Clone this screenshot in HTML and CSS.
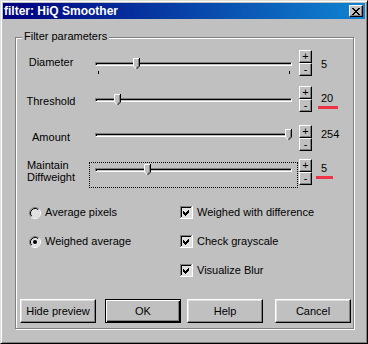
FILE: index.html
```html
<!DOCTYPE html>
<html>
<head>
<meta charset="utf-8">
<title>filter: HiQ Smoother</title>
<link rel="stylesheet" href="styles.css">
</head>
<body>
<div class="window">
  <div class="titlebar">
    <span class="title">filter: HiQ Smoother</span>
    <button class="close" aria-label="Close">
      <svg width="8" height="7" viewBox="0 0 8 7" shape-rendering="crispEdges"><path fill="#000" d="M0 0h2v1h-2z M6 0h2v1h-2z M1 1h2v1h-2z M5 1h2v1h-2z M2 2h4v1h-4z M3 3h2v1h-2z M2 4h4v1h-4z M1 5h2v1h-2z M5 5h2v1h-2z M0 6h2v1h-2z M6 6h2v1h-2z"/></svg>
    </button>
  </div>

  <div class="group">
    <span class="group-label">Filter parameters</span>

    <div class="param param-1">
      <div class="param-label">Diameter</div>
      <div class="slider">
        <div class="track"></div>
        <svg class="thumb" style="left:44px" width="7" height="12" viewBox="0 0 7 12"><path d="M0 0H7V8L3.5 11.5L0 8Z" fill="#c0c0c0"/><path d="M0.5 8V0.5H6" stroke="#fff" fill="none"/><path d="M0.5 8L3.5 11" stroke="#fff" fill="none"/><path d="M6.5 0V8L3.5 11" stroke="#000" fill="none"/><path d="M5.5 1V7.6L3.5 9.6" stroke="#808080" fill="none"/></svg>
        <span class="tick tick-min"></span>
        <span class="tick tick-max"></span>
      </div>
      <div class="spin"><button class="spin-btn">+</button><button class="spin-btn">-</button></div>
      <div class="value">5</div>
    </div>

    <div class="param param-2">
      <div class="param-label">Threshold</div>
      <div class="slider">
        <div class="track"></div>
        <svg class="thumb" style="left:25px" width="7" height="12" viewBox="0 0 7 12"><path d="M0 0H7V8L3.5 11.5L0 8Z" fill="#c0c0c0"/><path d="M0.5 8V0.5H6" stroke="#fff" fill="none"/><path d="M0.5 8L3.5 11" stroke="#fff" fill="none"/><path d="M6.5 0V8L3.5 11" stroke="#000" fill="none"/><path d="M5.5 1V7.6L3.5 9.6" stroke="#808080" fill="none"/></svg>
      </div>
      <div class="spin"><button class="spin-btn">+</button><button class="spin-btn">-</button></div>
      <div class="value">20<span class="mark mark-wide"></span></div>
    </div>

    <div class="param param-3">
      <div class="param-label">Amount</div>
      <div class="slider">
        <div class="track"></div>
        <svg class="thumb" style="left:196px" width="7" height="12" viewBox="0 0 7 12"><path d="M0 0H7V8L3.5 11.5L0 8Z" fill="#c0c0c0"/><path d="M0.5 8V0.5H6" stroke="#fff" fill="none"/><path d="M0.5 8L3.5 11" stroke="#fff" fill="none"/><path d="M6.5 0V8L3.5 11" stroke="#000" fill="none"/><path d="M5.5 1V7.6L3.5 9.6" stroke="#808080" fill="none"/></svg>
      </div>
      <div class="spin"><button class="spin-btn">+</button><button class="spin-btn">-</button></div>
      <div class="value">254</div>
    </div>

    <div class="param param-4">
      <div class="param-label"><span class="label-lines">Maintain<br>Diffweight</span></div>
      <div class="slider slider-focus">
        <div class="track"></div>
        <svg class="thumb" style="left:54px" width="7" height="12" viewBox="0 0 7 12"><path d="M0 0H7V8L3.5 11.5L0 8Z" fill="#c0c0c0"/><path d="M0.5 8V0.5H6" stroke="#fff" fill="none"/><path d="M0.5 8L3.5 11" stroke="#fff" fill="none"/><path d="M6.5 0V8L3.5 11" stroke="#000" fill="none"/><path d="M5.5 1V7.6L3.5 9.6" stroke="#808080" fill="none"/></svg>
      </div>
      <div class="spin"><button class="spin-btn">+</button><button class="spin-btn">-</button></div>
      <div class="value">5<span class="mark mark-narrow"></span></div>
    </div>

    <div class="options">
      <div class="opt-col opt-col-radio">
        <label class="opt">
          <svg class="radio" width="12" height="12" viewBox="0 0 12 12"><circle cx="6" cy="6" r="4.5" fill="#e0e0e0"/><path d="M2.11 9.89A5.5 5.5 0 0 1 9.89 2.11" stroke="#808080" fill="none"/><path d="M9.89 2.11A5.5 5.5 0 0 1 2.11 9.89" stroke="#fff" fill="none"/><path d="M2.82 9.18A4.5 4.5 0 0 1 9.18 2.82" stroke="#000" fill="none"/><path d="M9.18 2.82A4.5 4.5 0 0 1 2.82 9.18" stroke="#dfdfdf" fill="none"/></svg>
          <span>Average pixels</span>
        </label>
        <label class="opt">
          <svg class="radio" width="12" height="12" viewBox="0 0 12 12"><circle cx="6" cy="6" r="4.5" fill="#e0e0e0"/><path d="M2.11 9.89A5.5 5.5 0 0 1 9.89 2.11" stroke="#808080" fill="none"/><path d="M9.89 2.11A5.5 5.5 0 0 1 2.11 9.89" stroke="#fff" fill="none"/><path d="M2.82 9.18A4.5 4.5 0 0 1 9.18 2.82" stroke="#000" fill="none"/><path d="M9.18 2.82A4.5 4.5 0 0 1 2.82 9.18" stroke="#dfdfdf" fill="none"/><circle cx="6" cy="6" r="2" fill="#000"/></svg>
          <span>Weighed average</span>
        </label>
      </div>
      <div class="opt-col opt-col-check">
        <label class="opt">
          <svg class="check" width="13" height="13" viewBox="0 0 13 13" shape-rendering="crispEdges"><rect x="2" y="2" width="9" height="9" fill="#e0e0e0"/><path d="M0.5 13V0.5H13" stroke="#808080" fill="none"/><path d="M1.5 12V1.5H12" stroke="#000" fill="none"/><path d="M0 12.5H12.5V0" stroke="#fff" fill="none"/><path d="M1 11.5H11.5V1" stroke="#dfdfdf" fill="none"/><path d="M3 5L5 7L9 3V6L5 10L3 8Z" fill="#000"/></svg>
          <span>Weighed with difference</span>
        </label>
        <label class="opt">
          <svg class="check" width="13" height="13" viewBox="0 0 13 13" shape-rendering="crispEdges"><rect x="2" y="2" width="9" height="9" fill="#e0e0e0"/><path d="M0.5 13V0.5H13" stroke="#808080" fill="none"/><path d="M1.5 12V1.5H12" stroke="#000" fill="none"/><path d="M0 12.5H12.5V0" stroke="#fff" fill="none"/><path d="M1 11.5H11.5V1" stroke="#dfdfdf" fill="none"/><path d="M3 5L5 7L9 3V6L5 10L3 8Z" fill="#000"/></svg>
          <span>Check grayscale</span>
        </label>
        <label class="opt">
          <svg class="check" width="13" height="13" viewBox="0 0 13 13" shape-rendering="crispEdges"><rect x="2" y="2" width="9" height="9" fill="#e0e0e0"/><path d="M0.5 13V0.5H13" stroke="#808080" fill="none"/><path d="M1.5 12V1.5H12" stroke="#000" fill="none"/><path d="M0 12.5H12.5V0" stroke="#fff" fill="none"/><path d="M1 11.5H11.5V1" stroke="#dfdfdf" fill="none"/><path d="M3 5L5 7L9 3V6L5 10L3 8Z" fill="#000"/></svg>
          <span>Visualize Blur</span>
        </label>
      </div>
    </div>

    <div class="buttons">
      <button class="btn btn-hide">Hide preview</button>
      <button class="btn btn-default btn-ok">OK</button>
      <button class="btn btn-help">Help</button>
      <button class="btn btn-cancel">Cancel</button>
    </div>
  </div>
</div>
</body>
</html>
```

FILE: styles.css
```css
* { box-sizing: border-box; }

html, body {
  margin: 0;
  padding: 0;
}

body {
  width: 368px;
  height: 344px;
  overflow: hidden;
  background: #c0c0c0;
  font-family: "Liberation Sans", Arial, sans-serif;
  font-size: 11px;
  line-height: 13px;
  color: #000;
}

.window {
  width: 368px;
  height: 344px;
  background: #c0c0c0;
  border: 1px solid;
  border-color: #dfdfdf #000 #000 #dfdfdf;
  box-shadow: inset 1px 1px #fff, inset -1px -1px #808080;
  padding: 2px;
  display: flex;
  flex-direction: column;
}

.titlebar {
  height: 16px;
  flex: none;
  display: flex;
  justify-content: space-between;
  align-items: flex-start;
  background: linear-gradient(to right, #000080, #1084d0);
  color: #fff;
}

.title {
  font-weight: bold;
  font-size: 12px;
  line-height: 16px;
  padding-left: 1px;
  white-space: nowrap;
}

.close {
  width: 14px;
  height: 12px;
  margin: 2px 2px 0 0;
  padding: 0;
  background: #c0c0c0;
  border: 1px solid;
  border-color: #fff #000 #000 #fff;
  box-shadow: inset -1px -1px #808080;
  display: flex;
  align-items: center;
  justify-content: center;
}

.close svg { display: block; }

/* group box */
.group {
  position: relative;
  margin: 18px 0 0 12px;
  width: 339px;
  height: 292px;
  border: 1px solid #808080;
  box-shadow: inset 1px 1px #fff, 1px 1px #fff;
  padding-top: 12px;
}

.group-label {
  position: absolute;
  top: -8px;
  left: 6px;
  padding: 0 2px;
  background: #c0c0c0;
}

/* parameter rows */
.param {
  display: grid;
  grid-template-columns: 73px 209px 14px auto;
  align-items: start;
  height: 26px;
}

.param-2 { margin-top: 10px; }
.param-3 { margin-top: 13px; }
.param-4 { margin-top: 8px; }

.param-label {
  text-align: center;
  padding-right: 3px;
  white-space: nowrap;
}

.label-lines {
  display: inline-block;
  text-align: left;
  line-height: 12px;
}

.param-1 .param-label { margin-top: 6px; }
.param-2 .param-label { margin-top: 9px; }
.param-3 .param-label { margin-top: 6px; }
.param-4 .param-label { margin-top: 0; }

.slider {
  position: relative;
  height: 20px;
  padding: 6px 6px 0;
}

.param-1 .slider { margin-top: 6px; }
.param-2 .slider { margin-top: 6px; }
.param-3 .slider { margin-top: 2px; padding-top: 6px; }
.param-4 .slider { margin-top: 3px; }

.slider-focus {
  height: 26px;
  border: 1px dotted #000;
  padding: 5px 5px 0;
}

.track {
  height: 4px;
  border: 1px solid;
  border-color: #808080 #fff #fff #808080;
  box-shadow: inset 1px 1px #000;
  background: #c0c0c0;
}

.thumb {
  position: absolute;
  top: 2px;
  display: block;
}

.slider-focus .thumb { top: 1px; }

.tick {
  position: absolute;
  top: 15px;
  width: 1px;
  height: 3px;
  background: #000;
}

.tick-min { left: 9px; }
.tick-max { left: 200px; }

.spin {
  margin-left: 1px;
  width: 13px;
  display: flex;
  flex-direction: column;
}

.spin-btn {
  width: 13px;
  height: 13px;
  margin: 0;
  padding: 0 0 1px;
  background: #c0c0c0;
  border: 1px solid;
  border-color: #fff #000 #000 #fff;
  box-shadow: inset -1px -1px #808080;
  font-family: "Liberation Sans", Arial, sans-serif;
  font-size: 11px;
  line-height: 10px;
  color: #000;
  display: flex;
  align-items: center;
  justify-content: center;
}

.value {
  margin-left: 9px;
}

.param-1 .value { margin-top: 8px; }
.param-2 .value { margin-top: 6px; }
.param-3 .value { margin-top: 3px; }
.param-4 .value { margin-top: 3px; }

.mark {
  display: block;
  height: 3px;
  margin-top: 1px;
  background: #ee3344;
}

.mark-wide { width: 20px; margin-left: -3px; }
.mark-narrow { width: 17px; margin-left: -5px; }

/* options */
.options {
  display: flex;
  margin-top: 21px;
  padding-left: 13px;
}

.opt-col {
  display: flex;
  flex-direction: column;
  gap: 16px;
}

.opt-col-radio { width: 151px; }

.opt {
  display: flex;
  align-items: center;
  gap: 4px;
  height: 13px;
  white-space: nowrap;
}

.opt svg { display: block; flex: none; }
.radio { margin-top: 1px; }

/* buttons */
.buttons {
  display: flex;
  margin-top: 22px;
  padding-left: 4px;
}

.btn {
  width: 76px;
  height: 24px;
  margin: 0;
  padding: 0;
  background: #c0c0c0;
  border: 1px solid;
  border-color: #fff #000 #000 #fff;
  box-shadow: inset -1px -1px #808080, inset 1px 1px #dfdfdf;
  font-family: "Liberation Sans", Arial, sans-serif;
  font-size: 11px;
  line-height: 13px;
  color: #000;
}

.btn-default {
  border-color: #000;
  box-shadow: inset 1px 1px #fff, inset -1px -1px #000, inset -2px -2px #808080;
}

.btn-ok { margin-left: 9px; }
.btn-help { margin-left: 6px; }
.btn-cancel { margin-left: 12px; }
```
